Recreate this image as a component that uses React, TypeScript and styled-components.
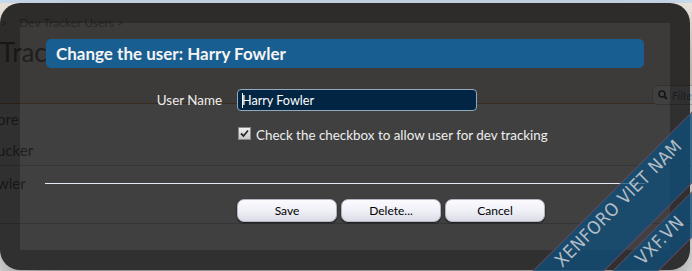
import styled, { createGlobalStyle } from 'styled-components';

const GlobalStyle = createGlobalStyle`
  html, body {
    margin: 0;
    padding: 0;
  }
  body {
    background: #ffffff;
    font-family: Lato, "Liberation Sans", sans-serif;
  }
`;

const Screen = styled.div`
  position: relative;
  width: 692px;
  height: 271px;
  overflow: hidden;
  background: #ffffff;
`;

/* page that sits behind the overlay */

const Page = styled.div`
  display: flex;
  flex-direction: column;
`;

const TopBar = styled.div`
  height: 3px;
  background: #cfe0f3;
`;

const PageHead = styled.div`
  position: relative;
  height: 100px;
  background: #f2ebe3;
  border-bottom: 1px solid #e2aa80;
`;

const Crumbs = styled.div`
  display: flex;
  gap: 12px;
  margin: 12px 0 0 -30px;
  font-size: 12px;
  color: #9a9a9a;
`;

const PageTitle = styled.h1`
  margin: 6px 0 0 -52px;
  font-size: 26px;
  font-weight: 400;
  color: #7a7a7a;
  white-space: nowrap;
`;

const FilterBox = styled.div`
  position: absolute;
  left: 652px;
  top: 82px;
  width: 80px;
  height: 18px;
  display: flex;
  align-items: center;
  gap: 4px;
  padding-left: 5px;
  background: #ffffff;
  border: 1px solid #c9c9c9;
  border-radius: 5px;
  font-size: 11px;
  font-style: italic;
  color: #8aa0b8;
`;

const List = styled.div`
  display: flex;
  flex-direction: column;
`;

const ListRow = styled.div<{ $h: number; $line?: boolean }>`
  height: ${(p) => p.$h}px;
  display: flex;
  align-items: center;
  margin-left: -3px;
  font-size: 15px;
  color: #7c7c7c;
  border-bottom: 1px solid ${(p) => (p.$line ? '#c8d6e4' : 'transparent')};
`;

/* overlay dialog */

const Overlay = styled.div`
  position: absolute;
  left: 0;
  top: 3px;
  width: 690px;
  height: 267px;
  box-sizing: border-box;
  padding: 16px 26px 0;
  background: rgba(0, 0, 0, 0.75);
  border: 20px solid rgba(0, 0, 0, 0.25);
  border-radius: 20px;
  box-shadow: 0 25px 50px rgba(0, 0, 0, 0.5);
  color: #eeeeee;
  font-size: 13.4px;
`;

const Heading = styled.h2`
  margin: 0;
  height: 29px;
  line-height: 29px;
  padding-left: 10px;
  background: #195e90;
  border-radius: 5px;
  font-size: 17px;
  font-weight: 700;
  color: #f4f4f4;
`;

const Unit = styled.div<{ $top: number }>`
  display: flex;
  align-items: center;
  margin-top: ${(p) => p.$top}px;
`;

const Label = styled.label`
  width: 176px;
  padding-right: 15px;
  text-align: right;
  color: #eeeeee;
`;

const Field = styled.div`
  position: relative;
  &::after {
    content: '';
    position: absolute;
    left: 5px;
    top: 4px;
    width: 1px;
    height: 15px;
    background: #ffffff;
  }
`;

const TextInput = styled.input`
  display: block;
  box-sizing: border-box;
  width: 240px;
  height: 22px;
  padding: 0 4px;
  background: #022543;
  border: 1px solid #90aac0;
  border-radius: 4px;
  color: #ffffff;
  font-family: Lato, "Liberation Sans", sans-serif;
  font-size: 12.6px;
  outline: none;
`;

const CheckLine = styled.label`
  display: flex;
  align-items: center;
  gap: 5px;
  margin-left: 192px;
`;

const Box = styled.span`
  width: 11px;
  height: 11px;
  display: flex;
  align-items: center;
  justify-content: center;
  background: linear-gradient(#f0f0f0, #c8c8c8);
  border: 1px solid #8a8a8a;
  margin-top: -3px;
`;

const Rule = styled.hr`
  margin: 40px -1px 0;
  border: 0;
  height: 1px;
  background: #e4eaf2;
`;

const Buttons = styled.div`
  display: flex;
  gap: 4px;
  margin: 15px 0 0 191px;
`;

const Button = styled.button`
  width: 100px;
  height: 23px;
  padding: 0;
  background: linear-gradient(#fbfbfe 0%, #eeeef6 55%, #dcdce8 100%);
  border: 1px solid #b4b4bf;
  border-radius: 7px;
  box-shadow: 0 1px 2px rgba(0, 0, 0, 0.6);
  color: #000000;
  font-family: Lato, "Liberation Sans", sans-serif;
  font-size: 12px;
`;

/* watermark ribbons */

const Ribbon = styled.div<{ $x: number; $y: number; $h: number; $shift: number; $lift: number }>`
  position: absolute;
  left: ${(p) => p.$x - 160}px;
  top: ${(p) => p.$y - p.$h / 2}px;
  width: 320px;
  height: ${(p) => p.$h}px;
  box-sizing: border-box;
  transform: rotate(-45deg);
  background: rgba(15, 78, 122, 0.78);
  border-top: 1px solid rgba(190, 70, 80, 0.45);
  border-bottom: 1px solid rgba(190, 70, 80, 0.45);
  display: flex;
  justify-content: center;
  padding-top: ${(p) => p.$lift}px;
  padding-right: ${(p) => p.$shift * 2}px;
  font-family: "DejaVu Sans Condensed", "Liberation Sans Narrow", "DejaVu Sans", sans-serif;
  font-stretch: condensed;
  font-size: 18px;
  line-height: 18px;
  letter-spacing: 0.5px;
  color: #b3bdc6;
  white-space: nowrap;
`;

const Check = () => (
  <svg width="9" height="9" viewBox="0 0 9 9">
    <path d="M1 4.5 L3.5 7 L8 1.5" fill="none" stroke="#2a2a2a" strokeWidth="1.8" />
  </svg>
);

const Lens = () => (
  <svg width="10" height="10" viewBox="0 0 10 10">
    <circle cx="4" cy="4" r="3" fill="none" stroke="#555" strokeWidth="1.6" />
    <path d="M6.2 6.2 L9 9" stroke="#555" strokeWidth="2" />
  </svg>
);

export default function App() {
  return (
    <Screen>
      <GlobalStyle />
      <Page>
        <TopBar />
        <PageHead>
          <Crumbs>
            <span>Tools &gt;</span>
            <span>Dev Tracker Users &gt;</span>
          </Crumbs>
          <PageTitle>Dev Tracker Users</PageTitle>
          <FilterBox>
            <Lens />
            Filter items
          </FilterBox>
        </PageHead>
        <List>
          <ListRow $h={30}>ore</ListRow>
          <ListRow $h={30} $line>ucker</ListRow>
          <ListRow $h={34}>wler</ListRow>
          <ListRow $h={22} $line />
        </List>
      </Page>

      <Overlay>
        <Heading>Change the user: Harry Fowler</Heading>
        <Unit $top={21}>
          <Label htmlFor="username">User Name</Label>
          <Field>
            <TextInput id="username" value="Harry Fowler" readOnly />
          </Field>
        </Unit>
        <Unit $top={16}>
          <CheckLine>
            <Box>
              <Check />
            </Box>
            Check the checkbox to allow user for dev tracking
          </CheckLine>
        </Unit>
        <Rule />
        <Buttons>
          <Button>Save</Button>
          <Button>Delete...</Button>
          <Button>Cancel</Button>
        </Buttons>
      </Overlay>

      <Ribbon $x={640} $y={199} $h={51} $shift={18} $lift={3}>
        XENFORO VIET NAM
      </Ribbon>
      <Ribbon $x={670} $y={236} $h={33} $shift={10} $lift={2}>
        VXF.VN
      </Ribbon>
    </Screen>
  );
}
